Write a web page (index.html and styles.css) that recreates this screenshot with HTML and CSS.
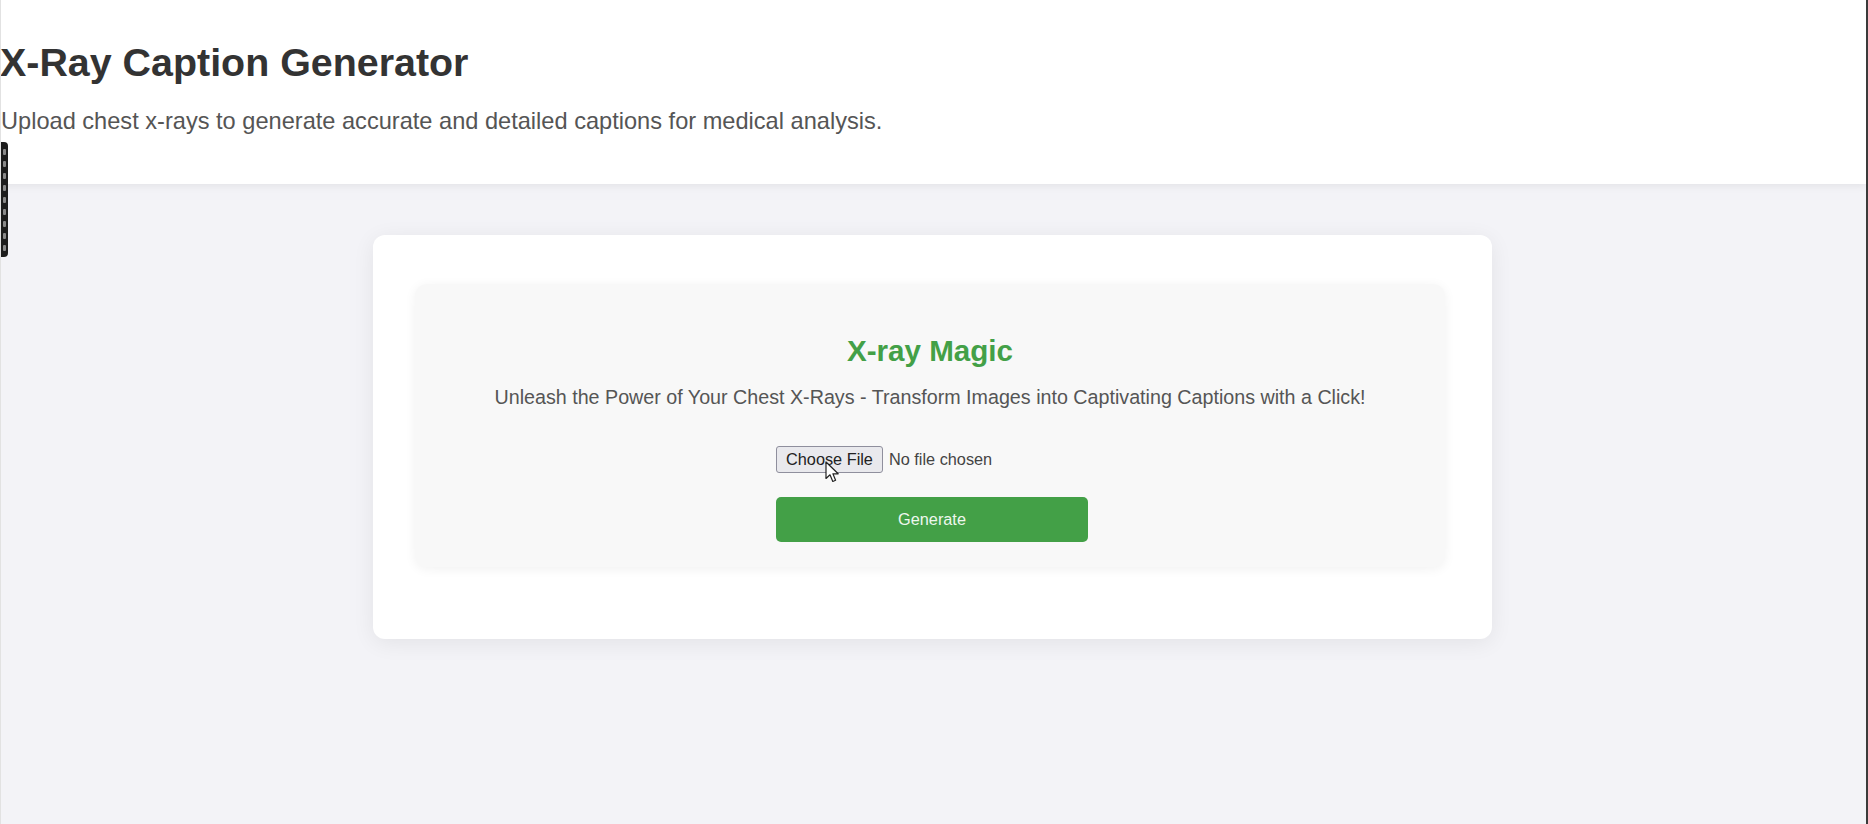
FILE: index.html
```html
<!DOCTYPE html>
<html lang="en">
<head>
<meta charset="utf-8">
<title>X-Ray Caption Generator</title>
<link rel="stylesheet" href="styles.css">
</head>
<body>
<div class="page">
  <header class="site-header">
    <h1 class="site-title">X-Ray Caption Generator</h1>
    <p class="site-subtitle">Upload chest x-rays to generate accurate and detailed captions for medical analysis.</p>
  </header>
  <main class="main">
    <section class="card">
      <div class="panel">
        <h2 class="panel-title">X-ray Magic</h2>
        <p class="panel-text">Unleash the Power of Your Chest X-Rays - Transform Images into Captivating Captions with a Click!</p>
        <form class="upload-form">
          <label class="file-row">
            <input class="file-input" type="file">
            <span class="file-btn">Choose File</span>
            <span class="file-name">No file chosen</span>
            <svg class="cursor" width="16" height="23" viewBox="0 0 16 23"><path d="M1 1 L1 17.5 L5 13.8 L7.8 20.5 L10.6 19.3 L7.9 12.8 L13.2 12.8 Z" fill="#fff" stroke="#222" stroke-width="1.2" stroke-linejoin="round"/></svg>
          </label>
          <button class="generate-btn" type="button">Generate</button>
        </form>
      </div>
    </section>
  </main>
  <div class="side-tab"><span></span><span></span><span></span><span></span><span></span><span></span><span></span><span></span><span></span></div>
</div>
</body>
</html>
```
FILE: styles.css
```css
html, body {
  margin: 0;
  padding: 0;
}
body {
  font-family: "Liberation Sans", Arial, sans-serif;
  background: #f3f3f7;
  color: #333;
}
.page {
  position: relative;
  width: 1868px;
  height: 824px;
  box-sizing: border-box;
  border-right: 2px solid #3a3a3a;
  border-left: 1px solid #e2e2e2;
  overflow: hidden;
}
.site-header {
  background: #fff;
  padding: 39px 0 49px 0;
  box-shadow: 0 2px 8px rgba(0, 0, 0, 0.07);
  position: relative;
}
.site-title {
  margin: 0 0 23px -1px;
  font-size: 39.4px;
  line-height: 46px;
  font-weight: bold;
  color: #333;
}
.site-subtitle {
  margin: 0;
  font-size: 23.6px;
  line-height: 27px;
  color: #555;
}
.main {
  display: flex;
  justify-content: center;
  padding-top: 51px;
  padding-right: 2px;
}
.card {
  width: 1119px;
  box-sizing: border-box;
  background: #fff;
  border-radius: 12px;
  box-shadow: 0 4px 22px rgba(0, 0, 0, 0.07);
  padding: 49px 47px 72px 42px;
}
.panel {
  background: #f8f8f8;
  border-radius: 12px;
  box-shadow: 0 2px 12px rgba(0, 0, 0, 0.06);
  padding: 49px 20px 25px;
  display: flex;
  flex-direction: column;
  align-items: center;
}
.panel-title {
  margin: 0 0 18px;
  font-size: 29.6px;
  line-height: 35px;
  font-weight: bold;
  color: #43a047;
}
.panel-text {
  margin: 0 0 37px;
  font-size: 19.7px;
  line-height: 23px;
  color: #555;
}
.upload-form {
  width: 312px;
  margin-left: 4px;
  display: flex;
  flex-direction: column;
  gap: 24px;
}
.file-row {
  position: relative;
  display: flex;
  align-items: center;
  gap: 6px;
  height: 27px;
}
.file-input {
  display: none;
}
.file-btn {
  box-sizing: border-box;
  height: 27px;
  width: 107px;
  display: flex;
  align-items: center;
  justify-content: center;
  background: #e9e9ed;
  border: 1px solid #8f8f9d;
  border-radius: 3px;
  font-size: 16.3px;
  color: #222;
}
.file-name {
  font-size: 16.3px;
  color: #444;
}
.cursor {
  position: absolute;
  left: 49px;
  top: 15px;
}
.generate-btn {
  height: 45px;
  width: 312px;
  border: none;
  border-radius: 5px;
  background: #43a047;
  color: #eef7ee;
  font-family: "Liberation Sans", Arial, sans-serif;
  font-size: 16.3px;
  padding: 0;
}
.side-tab {
  position: absolute;
  left: 0;
  top: 142px;
  width: 7px;
  height: 115px;
  background: #1d1d1d;
  border-radius: 0 4px 4px 0;
  display: flex;
  flex-direction: column;
  align-items: center;
  justify-content: center;
  gap: 6px;
}
.side-tab span {
  width: 3px;
  height: 6px;
  background: #8a8a8a;
  border-radius: 1px;
}
```
